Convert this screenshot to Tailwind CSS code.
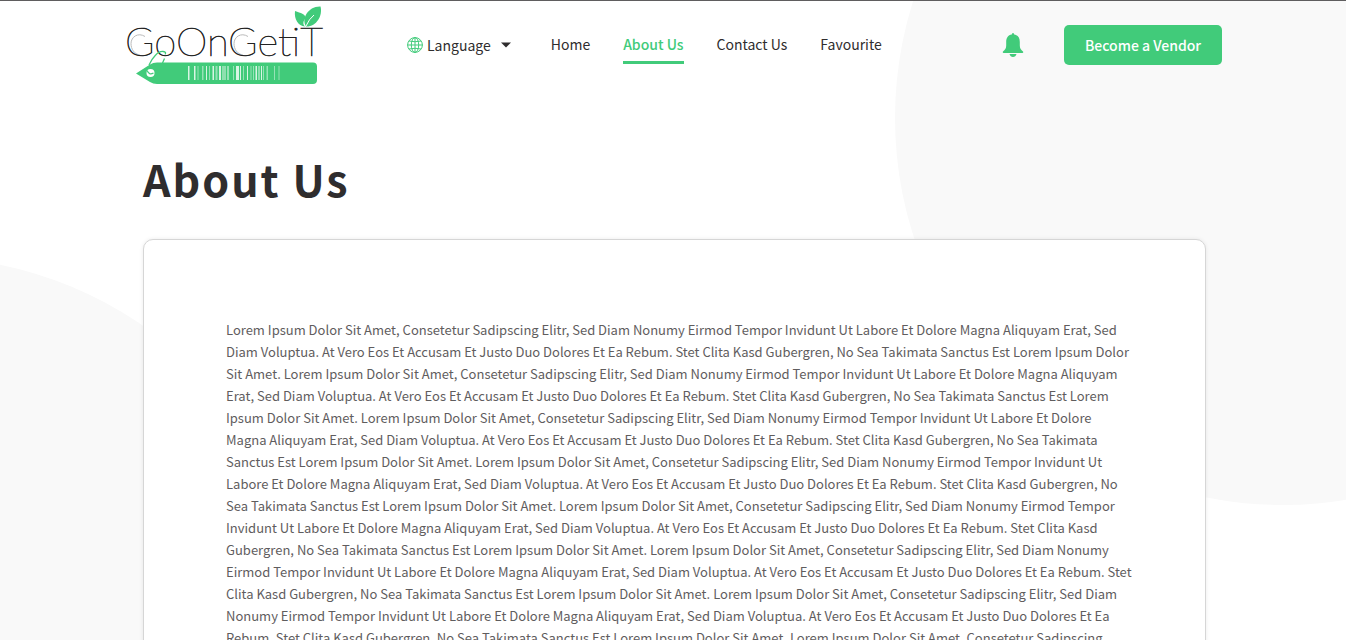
<!DOCTYPE html>
<html lang="en">
<head>
<meta charset="utf-8">
<meta name="viewport" content="width=device-width, initial-scale=1">
<title>About Us - GoOnGetiT</title>
<script src="https://cdn.jsdelivr.net/npm/@tailwindcss/browser@4"></script>
</head>
<body class="overflow-x-hidden bg-white font-['Noto_Sans_CJK_JP','Noto_Sans',sans-serif] text-[#2f2d2e]">
<div class="relative border-t border-[#5f5d5e] pb-16">
  <!-- Background circles -->
  <div class="absolute inset-0 -z-10 overflow-hidden">
    <div class="absolute -top-[270px] -right-[323px] size-[774px] rounded-full bg-[#f9f9f9]"></div>
    <div class="absolute top-[256px] -left-[464px] size-[774px] rounded-full bg-[#f9f9f9]"></div>
  </div>

  <header class="flex h-[88px] items-center pr-[124px] pl-[124px]">
    <a href="#" aria-label="GoOnGetiT" class="mr-[79px] shrink-0">
      <svg class="block" width="204" height="88" viewBox="0 0 204 88" fill="none">
        <g stroke="#bbb" stroke-width="1">
          <path d="M21 35.500C14 31 7 36 7 42.500C7 48 10 53 16 54"/>
          <path d="M124 35.500C117 31 110 36 110 42.500C110 48 113 53 119 54"/>
        </g>
        <text x="1" y="55" font-family="Lato" font-weight="100" font-size="40" fill="#222" stroke="#222" stroke-width=".7">GoOnGetiT</text>
        <path d="M12 72.500 26 63.500Q29 61.500 33 61.500H189Q193 61.500 193 65.500V79Q193 83 189 83H33Q29 83 26 81Z" fill="#41cb7a"/>
        <circle cx="26.500" cy="72" r="4" fill="#fff"/>
        <path d="M23 69.500C25 73.500 27 73.500 29.500 72" stroke="#41cb7a" stroke-width="1.300"/>
        <path d="M25 64C28 57 34 50 39 50.500C42 51 42 52 41 53.500M40.500 57.500 38.500 62" stroke="#41cb7a" stroke-width="1.300"/>
        <g fill="#fff">
          <path d="M64 65h1.500v14H64zM70 65h1.500v14H70zM82 65h1v14h-1zM88.500 65h1.500v14h-1.500zM95 65h2v14h-2zM98.500 65h1v14h-1zM100.500 65h1v14h-1zM112 65h3v14h-3zM116 65h1v14h-1zM123 65h1v14h-1zM131.500 65h1.500v14h-1.500zM134.500 65h1v14h-1zM137 65h1v14h-1z" opacity=".8"/>
          <path d="M73.500 65h1v14h-1zM78 65h1.500v14H78zM85 65h1v14h-1zM91.500 65h2v14h-2zM103 65h2v14h-2zM109 65h1v14h-1zM119 65h1v14h-1zM126.500 65h1v14h-1zM129 65h1v14h-1zM139 65h1v14h-1zM142.500 65h1.500v14h-1.500zM150 65h1v14h-1zM154.500 65h1v14h-1z" opacity=".45"/>
        </g>
        <path d="M181 25.500C174 25 170 18 171 10C177 12 181 13 182 17C179 20 178.500 23 181 25.500Z" fill="#41cb7a"/>
        <path d="M182 25.500C177 18 184 5 196.500 5.500C199 15 192 26 182 25.500Z" fill="#41cb7a"/>
        <path d="M182 25Q185 18 190 14" stroke="#fff" stroke-width="1"/>
      </svg>
    </a>

    <nav class="flex items-center gap-[33px] pb-0.5 text-[14px] leading-6">
      <button type="button" class="mr-[7px] flex items-center gap-1 pt-0.5">
        <svg width="16" height="16" viewBox="0 0 16 16" fill="none" stroke="#41cb7a"><circle cx="8" cy="8" r="7.400"/><ellipse cx="8" cy="8" rx="3.700" ry="7.400"/><path d="M8 .5v15M.5 8h15M2 4q6 1.500 12 0M2 12q6-1.500 12 0"/></svg>
        <span>Language</span>
        <svg class="ml-1.5" width="10" height="6" viewBox="0 0 10 6"><path d="M0 .5h10L5 5.500z" fill="#2f2d2e"/></svg>
      </button>
      <a href="#">Home</a>
      <a href="#" aria-current="page" class="relative font-medium text-[#41cb7a]">About Us<span class="absolute inset-x-0 -bottom-2 h-[3px] bg-[#41cb7a]"></span></a>
      <a href="#">Contact Us</a>
      <a href="#">Favourite</a>
    </nav>

    <button type="button" aria-label="Notifications" class="mr-10 ml-auto">
      <svg class="block" width="22" height="24" viewBox="0 0 22 24" fill="#41cb7a"><path d="M11 0q1.200 0 1.200 1.600C16 2.200 17.800 5 17.800 9v3.500c0 3 1.200 4.500 3.200 6 .5.700.2 1.500-.6 1.500H1.600c-.8 0-1.100-.8-.6-1.500 2-1.500 3.200-3 3.200-6V9c0-4 1.800-6.800 5.600-7.400Q9.800 0 11 0zM7.500 21h7q-.8 3-3.500 3t-3.500-3z"/></svg>
    </button>
    <button type="button" class="h-10 w-[158px] rounded-[5px] bg-[#41cb7a] text-[14px] font-medium text-white">Become a Vendor</button>
  </header>

  <main class="pr-[140px] pl-[143px]">
    <h1 class="mt-14 text-[43px] leading-[66px] font-bold tracking-[2px]">About Us</h1>
    <section class="mt-7 rounded-[10px] border border-[#d6d6d6] bg-white pt-[79px] pr-[72px] pb-20 pl-[82px] shadow-[0_0_4px_rgba(0,0,0,0.08)]">
      <p class="text-[13px] leading-[22px] text-[#5f5d5e] capitalize">Lorem ipsum dolor sit amet, consetetur sadipscing elitr, sed diam nonumy eirmod tempor invidunt ut labore et dolore magna aliquyam erat, sed diam voluptua. At vero eos et accusam et justo duo dolores et ea rebum. Stet clita kasd gubergren, no sea takimata sanctus est Lorem ipsum dolor sit amet. Lorem ipsum dolor sit amet, consetetur sadipscing elitr, sed diam nonumy eirmod tempor invidunt ut labore et dolore magna aliquyam erat, sed diam voluptua. At vero eos et accusam et justo duo dolores et ea rebum. Stet clita kasd gubergren, no sea takimata sanctus est Lorem ipsum dolor sit amet. Lorem ipsum dolor sit amet, consetetur sadipscing elitr, sed diam nonumy eirmod tempor invidunt ut labore et dolore magna aliquyam erat, sed diam voluptua. At vero eos et accusam et justo duo dolores et ea rebum. Stet clita kasd gubergren, no sea takimata sanctus est Lorem ipsum dolor sit amet. Lorem ipsum dolor sit amet, consetetur sadipscing elitr, sed diam nonumy eirmod tempor invidunt ut labore et dolore magna aliquyam erat, sed diam voluptua. At vero eos et accusam et justo duo dolores et ea rebum. Stet clita kasd gubergren, no sea takimata sanctus est Lorem ipsum dolor sit amet. Lorem ipsum dolor sit amet, consetetur sadipscing elitr, sed diam nonumy eirmod tempor invidunt ut labore et dolore magna aliquyam erat, sed diam voluptua. At vero eos et accusam et justo duo dolores et ea rebum. Stet clita kasd gubergren, no sea takimata sanctus est Lorem ipsum dolor sit amet. Lorem ipsum dolor sit amet, consetetur sadipscing elitr, sed diam nonumy eirmod tempor invidunt ut labore et dolore magna aliquyam erat, sed diam voluptua. At vero eos et accusam et justo duo dolores et ea rebum. Stet clita kasd gubergren, no sea takimata sanctus est Lorem ipsum dolor sit amet. Lorem ipsum dolor sit amet, consetetur sadipscing elitr, sed diam nonumy eirmod tempor invidunt ut labore et dolore magna aliquyam erat, sed diam voluptua. At vero eos et accusam et justo duo dolores et ea rebum. Stet clita kasd gubergren, no sea takimata sanctus est Lorem ipsum dolor sit amet. Lorem ipsum dolor sit amet, consetetur sadipscing elitr, sed diam nonumy eirmod tempor invidunt ut labore et dolore magna aliquyam erat, sed diam voluptua.</p>
    </section>
  </main>
</div>
</body>
</html>
